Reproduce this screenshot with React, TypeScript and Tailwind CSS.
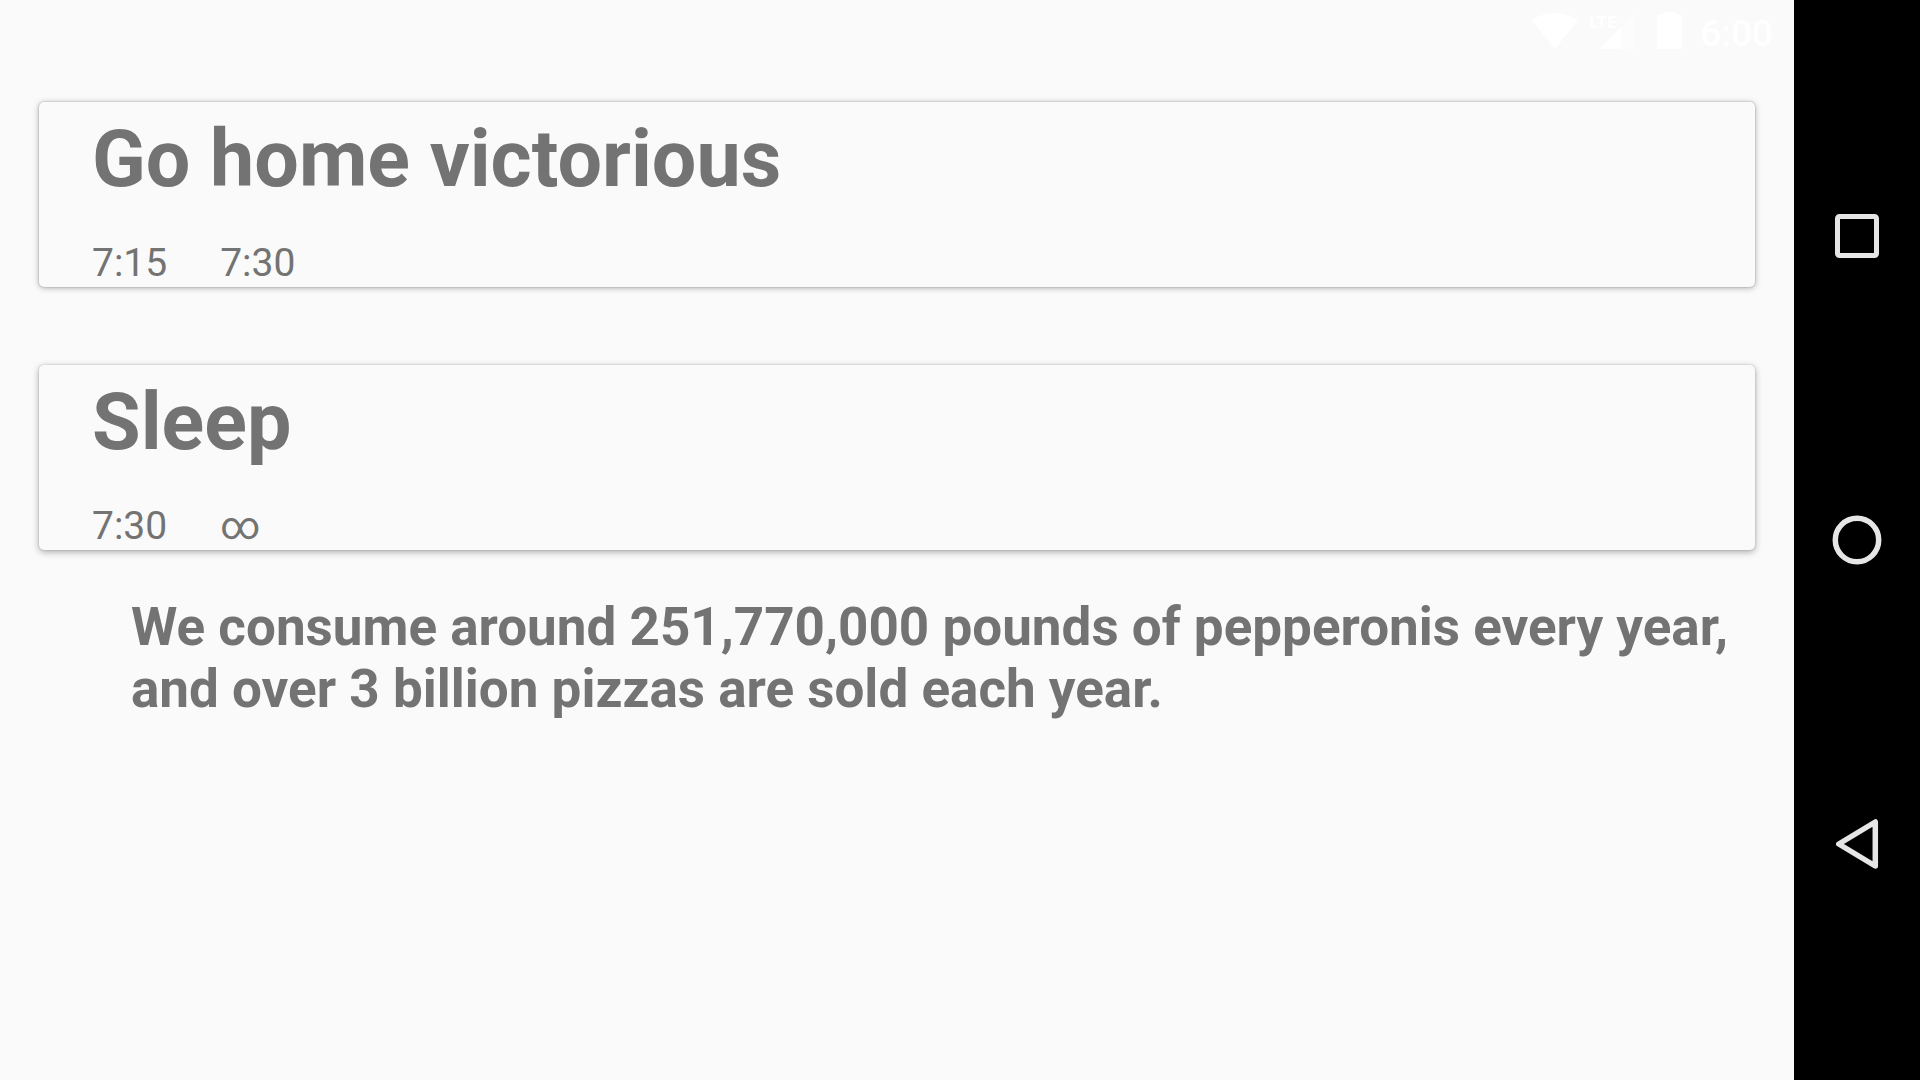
type Task = {
    title: string;
    start: string;
    end: string;
    shadow: string;
};

// the cast shadow drops further the lower a card sits on the screen
const TASKS: Task[] = [
    { title: "Go home victorious", start: "7:15", end: "7:30", shadow: "shadow-[0_1px_6px_rgba(0,0,0,0.3),0_0_2px_rgba(0,0,0,0.26)]" },
    { title: "Sleep", start: "7:30", end: "∞", shadow: "shadow-[0_2px_7px_rgba(0,0,0,0.32),0_0_2px_rgba(0,0,0,0.2)]" },
];

function StatusBar() {
    return (
        <header className="flex h-[63px] items-start justify-end pr-[21px] pt-3 text-white">
            <svg width="46" height="37" viewBox="0 0 46 37" fill="currentColor" aria-label="Wi-Fi">
                <path d="M23 37 0 8.500C6 3.600 14 1 23 1s17 2.600 23 7.500z" />
            </svg>
            <svg width="46" height="37" viewBox="0 0 46 37" className="ml-3" fill="currentColor" aria-label="Mobile signal">
                <path d="M45 1v36H9z" opacity="0.4" />
                <path d="M31 15v22H9z" />
                <text x="-1" y="16" fontSize="17" fontWeight="900" fontFamily="'Liberation Sans Narrow', Roboto, sans-serif">LTE</text>
            </svg>
            <svg width="25" height="37" viewBox="0 0 25 37" className="ml-[21px]" fill="currentColor" aria-label="Battery">
                <path d="M6 0h13v3h6v34H0V3h6z" />
            </svg>
            <span className="ml-[18px] text-[37px] font-medium leading-[44px]">6:00</span>
        </header>
    );
}

function TaskCard({ task }: { task: Task }) {
    return (
        <article className={`rounded-[5px] bg-[#fafafa] px-[53px] pb-px pt-[11px] ${task.shadow}`}>
            <h2 className="text-[79px] font-bold leading-[92px]">{task.title}</h2>
            <div className="mt-[35px] flex gap-[53px] text-[39px] leading-[46px]">
                <span>{task.start}</span>
                <span>{task.end}</span>
            </div>
        </article>
    );
}

function NavBar() {
    return (
        <nav className="flex w-[126px] shrink-0 flex-col bg-black py-[84px] text-[#e6e6e6]">
            <button type="button" aria-label="Overview" className="flex flex-1 items-center justify-center">
                <svg width="50" height="50" viewBox="0 0 50 50" fill="none" stroke="currentColor" strokeWidth="5">
                    <rect x="5.500" y="5.500" width="39" height="39" rx="2" />
                </svg>
            </button>
            <button type="button" aria-label="Home" className="flex flex-1 items-center justify-center">
                <svg width="50" height="50" viewBox="0 0 50 50" fill="none" stroke="currentColor" strokeWidth="5.500">
                    <circle cx="25" cy="25" r="21.700" />
                </svg>
            </button>
            <button type="button" aria-label="Back" className="flex flex-1 items-center justify-center">
                <svg width="50" height="50" viewBox="0 0 50 50" fill="none" stroke="currentColor" strokeWidth="5.500" strokeLinejoin="round">
                    <path d="M43.300 3v44L6.800 25z" />
                </svg>
            </button>
        </nav>
    );
}

export default function App() {
    return (
        <div className="flex min-h-screen bg-[#fafafa] font-['Roboto',sans-serif] text-[#737373]">
            <div className="min-w-0 flex-1">
                <StatusBar />
                <main className="px-[39px] pt-[39px]">
                    <div className="flex flex-col gap-[78px]">
                        {TASKS.map((task) => (
                            <TaskCard key={task.title} task={task} />
                        ))}
                    </div>
                    <p className="ml-[92px] mt-[46px] text-[53px] font-bold leading-[62px]">
                        We consume around 251,770,000 pounds of pepperonis every year, and over 3 billion pizzas are sold each year.
                    </p>
                </main>
            </div>
            <NavBar />
        </div>
    );
}
